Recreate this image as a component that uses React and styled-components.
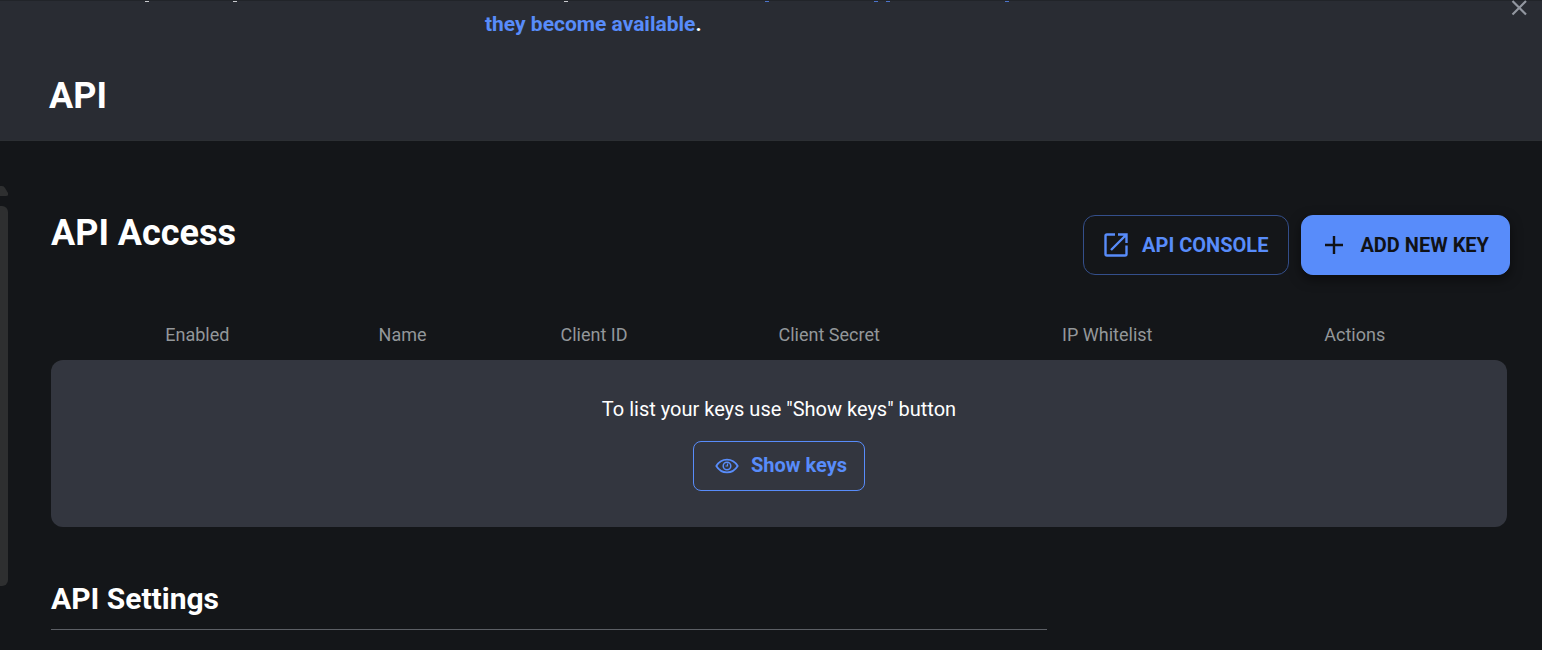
import React from "react";
import styled, { createGlobalStyle } from "styled-components";

const GlobalStyle = createGlobalStyle`
  *, *::before, *::after { box-sizing: border-box; }
  html { overflow: hidden; }
  body {
    margin: 0;
    background: #141619;
    color: #fff;
    font-family: Roboto, "Liberation Sans", sans-serif;
  }
`;

const Page = styled.div`
  position: relative;
`;

const Header = styled.header`
  position: relative;
  background: #292c33;
  border-top: 1px solid #212429;
  border-bottom: 1px solid #2c2f33;
`;

const Banner = styled.div`
  display: flex;
  height: 48px;
  padding: 8px 14px 0 485px;
  font-size: 21px;
  line-height: 30px;
  font-weight: 700;
`;

const BannerText = styled.p`
  flex: 1;
  margin: 0;
`;

const BannerLink = styled.a`
  color: #588cfa;
  text-decoration: none;
`;

const CloseButton = styled.button`
  display: flex;
  align-self: flex-start;
  margin-top: -9px;
  padding: 0;
  border: 0;
  background: none;
  color: #9297a0;
`;

const Tails = styled.svg`
  position: absolute;
  top: 0;
  left: 0;
`;

const PageTitle = styled.h1`
  margin: 0;
  padding: 26px 49px 22px;
  font-size: 36px;
  line-height: 43px;
  font-weight: 700;
`;

const Rail = styled.div`
  position: absolute;
  top: 185px;
  left: 0;
  width: 8px;
`;

const RailArrow = styled.svg`
  display: block;
`;

const RailBar = styled.div`
  height: 380px;
  margin-top: 10px;
  border-radius: 0 6px 6px 0;
  background: #2e2f30;
`;

const Main = styled.main`
  padding: 74px 32px 0 51px;
`;

const SectionHead = styled.div`
  display: flex;
  justify-content: space-between;
  align-items: flex-start;
`;

const SectionTitle = styled.h2`
  margin: 0;
  font-size: 36px;
  line-height: 36px;
  font-weight: 700;
`;

const Actions = styled.div`
  display: flex;
  gap: 12px;
`;

const ActionButton = styled.button`
  display: flex;
  align-items: center;
  gap: 12px;
  height: 60px;
  padding: 0 20px 0 18px;
  border: 1px solid ${(p) => (p.$filled ? "#588cfa" : "#344f8b")};
  border-radius: 12px;
  background: ${(p) => (p.$filled ? "#588cfa" : "transparent")};
  color: ${(p) => (p.$filled ? "#101216" : "#588cfa")};
  box-shadow: ${(p) => (p.$filled ? "0 4px 12px rgba(0, 0, 0, 0.5)" : "none")};
  font: 700 20px/24px Roboto, "Liberation Sans", sans-serif;
`;

const KeysTable = styled.table`
  width: calc(100% - 3px);
  margin-top: 34px;
  border-collapse: separate;
  border-spacing: 0;
  table-layout: fixed;
`;

const HeadCell = styled.th`
  width: ${(p) => p.$width};
  height: 51px;
  padding: 0;
  color: #93979a;
  font-size: 18px;
  line-height: 24px;
  font-weight: 400;
  text-align: center;
`;

const EmptyCell = styled.td`
  height: 167px;
  padding: 0;
  border-radius: 12px;
  background: #33363f;
  text-align: center;
`;

const EmptyText = styled.p`
  margin: 0 0 20px;
  font-size: 20px;
  line-height: 24px;
`;

const ShowButton = styled.button`
  display: inline-flex;
  align-items: center;
  gap: 12px;
  height: 50px;
  padding: 0 17px 2px 21px;
  border: 1px solid #588cfa;
  border-radius: 8px;
  background: transparent;
  color: #588cfa;
  vertical-align: top;
  font: 700 20px/24px Roboto, "Liberation Sans", sans-serif;
`;

const SettingsTitle = styled.h2`
  width: 68.3%;
  margin: 54px 0 0;
  padding-bottom: 12px;
  border-bottom: 1px solid #5c5f65;
  font-size: 30px;
  line-height: 36px;
  font-weight: 700;
`;

const CloseIcon = () => (
  <svg width="18" height="18" viewBox="0 0 18 18" fill="none" stroke="currentColor" strokeWidth="2.2">
    <path d="M2.500 1 16 14.500M16 1 2.500 14.500" />
  </svg>
);

const ConsoleIcon = () => (
  <svg width="28" height="28" viewBox="0 0 28 28" fill="none" stroke="currentColor" strokeWidth="2.4">
    <path d="M13 3.500H5Q3.500 3.500 3.500 5V23Q3.500 24.500 5 24.500H23Q24.500 24.500 24.500 23V14.500" />
    <path d="M16 3.500H24.500V12M24 4 9 19" />
  </svg>
);

const PlusIcon = () => (
  <svg width="28" height="28" viewBox="0 0 28 28" fill="none" stroke="currentColor" strokeWidth="2.4">
    <path d="M14 5V23M5 14H23" />
  </svg>
);

const EyeIcon = () => (
  <svg width="24" height="26" viewBox="0 0 24 26" fill="none" stroke="currentColor" strokeWidth="1.8">
    <path d="M1.300 14C6.500 5.500 17.500 5.500 22.700 14C17.500 22.500 6.500 22.500 1.300 14Z" strokeLinejoin="round" />
    <circle cx="12" cy="14" r="3.800" strokeWidth="1.5" />
    <path d="M12.500 11.500V14H10.500" strokeWidth="1.2" />
  </svg>
);

const COLUMNS = [
  { label: "Enabled", width: "20.1%" },
  { label: "Name", width: "8.1%" },
  { label: "Client ID", width: "18.2%" },
  { label: "Client Secret", width: "14.1%" },
  { label: "IP Whitelist", width: "24.1%" },
  { label: "Actions", width: "9.9%" },
];

export default function App() {
  return (
    <Page>
      <GlobalStyle />
      <Header>
        <Tails width="1010" height="1" aria-hidden="true">
          <path d="M145 .5h4M233 .5h4M564 .5h4" stroke="#c9cbcf" />
          <path d="M765 .5h4M874 .5h4M886 .5h4M1005 .5h4" stroke="#4c74cc" />
        </Tails>
        <Banner>
          <BannerText>
            <BannerLink href="#updates">they become available</BannerLink>.
          </BannerText>
          <CloseButton type="button" aria-label="Close">
            <CloseIcon />
          </CloseButton>
        </Banner>
        <PageTitle>API</PageTitle>
      </Header>
      <Rail>
        <RailArrow width="8" height="11" viewBox="0 0 8 11">
          <path d="M0 1H2Q4 1 5 3L8 8Q9 11 6 11H0Z" fill="#2e2f30" />
        </RailArrow>
        <RailBar />
      </Rail>
      <Main>
        <SectionHead>
          <SectionTitle>API Access</SectionTitle>
          <Actions>
            <ActionButton type="button">
              <ConsoleIcon />
              API CONSOLE
            </ActionButton>
            <ActionButton type="button" $filled>
              <PlusIcon />
              ADD NEW KEY
            </ActionButton>
          </Actions>
        </SectionHead>
        <KeysTable>
          <thead>
            <tr>
              {COLUMNS.map((c) => (
                <HeadCell key={c.label} scope="col" $width={c.width}>
                  {c.label}
                </HeadCell>
              ))}
              <td />
            </tr>
          </thead>
          <tbody>
            <tr>
              <EmptyCell colSpan={COLUMNS.length + 1}>
                <EmptyText>To list your keys use "Show keys" button</EmptyText>
                <ShowButton type="button">
                  <EyeIcon />
                  Show keys
                </ShowButton>
              </EmptyCell>
            </tr>
          </tbody>
        </KeysTable>
        <SettingsTitle>API Settings</SettingsTitle>
      </Main>
    </Page>
  );
}
